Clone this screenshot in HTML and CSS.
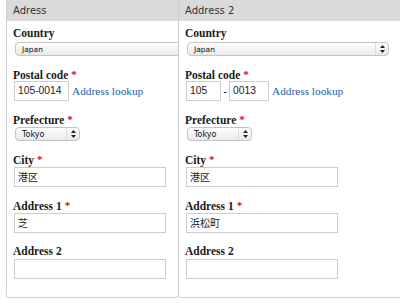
FILE: index.html
```html
<!DOCTYPE html>
<html>
<head>
<meta charset="utf-8">
<link rel="stylesheet" href="styles.css">
</head>
<body>
<div class="page">
  <section class="panel panel-left">
    <div class="panel-head">Adress</div>
    <div class="panel-body">
      <div class="field">
        <div class="label">Country</div>
        <div class="select select-wide"><span>Japan</span></div>
      </div>
      <div class="field">
        <div class="label">Postal code<span class="req">*</span></div>
        <div class="row">
          <div class="input input-postal">105-0014</div>
          <a class="lookup">Address lookup</a>
        </div>
      </div>
      <div class="field">
        <div class="label">Prefecture<span class="req">*</span></div>
        <div class="select select-small"><span>Tokyo</span><span class="arrows"><svg width="5" height="8" viewBox="0 0 5 8"><path d="M2.5 0L5 3H0z M2.5 8L5 5H0z" fill="#222"/></svg></span></div>
      </div>
      <div class="field">
        <div class="label">City<span class="req">*</span></div>
        <div class="input input-full">港区</div>
      </div>
      <div class="field">
        <div class="label">Address 1<span class="req">*</span></div>
        <div class="input input-full">芝</div>
      </div>
      <div class="field">
        <div class="label">Address 2</div>
        <div class="input input-full"></div>
      </div>
    </div>
  </section>
  <section class="panel panel-right">
    <div class="panel-head">Address 2</div>
    <div class="panel-body">
      <div class="field">
        <div class="label">Country</div>
        <div class="select select-wide2"><span>Japan</span><span class="arrows"><svg width="5" height="8" viewBox="0 0 5 8"><path d="M2.5 0L5 3H0z M2.5 8L5 5H0z" fill="#222"/></svg></span></div>
      </div>
      <div class="field">
        <div class="label">Postal code<span class="req">*</span></div>
        <div class="row">
          <div class="input input-p1">105</div>
          <span class="dash">-</span>
          <div class="input input-p2">0013</div>
          <a class="lookup">Address lookup</a>
        </div>
      </div>
      <div class="field">
        <div class="label">Prefecture<span class="req">*</span></div>
        <div class="select select-small"><span>Tokyo</span><span class="arrows"><svg width="5" height="8" viewBox="0 0 5 8"><path d="M2.5 0L5 3H0z M2.5 8L5 5H0z" fill="#222"/></svg></span></div>
      </div>
      <div class="field">
        <div class="label">City<span class="req">*</span></div>
        <div class="input input-full">港区</div>
      </div>
      <div class="field">
        <div class="label">Address 1<span class="req">*</span></div>
        <div class="input input-full">浜松町</div>
      </div>
      <div class="field">
        <div class="label">Address 2</div>
        <div class="input input-full"></div>
      </div>
    </div>
  </section>
</div>
</body>
</html>
```
FILE: styles.css
```css
html, body {
  margin: 0;
  padding: 0;
  background: #fff;
  width: 400px;
  height: 304px;
  overflow: hidden;
}
.page {
  display: flex;
  align-items: flex-start;
  padding-left: 6px;
}
.panel {
  border: 1px solid #cfcfcf;
  border-top: none;
  border-radius: 0 0 4px 4px;
  background: #fff;
  height: 298px;
  box-sizing: border-box;
  overflow: hidden;
  flex: none;
}
.panel-left {
  width: 173px;
}
.panel-right {
  width: 240px;
  margin-left: -1px;
}
.panel-head {
  height: 21px;
  background: #dadada;
  font-family: "DejaVu Sans", Verdana, sans-serif;
  font-size: 10px;
  color: #333;
  line-height: 22px;
  padding-left: 6px;
}
.panel-body {
  padding: 5px 0 0 6px;
}
.field {
  margin-bottom: 11px;
}
.label {
  font-family: "Liberation Serif", "Times New Roman", serif;
  font-weight: bold;
  font-size: 11.5px;
  color: #1a1a1a;
  line-height: 14px;
  height: 14px;
  white-space: nowrap;
}
.req {
  color: #e00;
  margin-left: 3px;
  font-size: 11px;
  vertical-align: 1px;
}
.select {
  display: flex;
  align-items: center;
  justify-content: space-between;
  height: 14px;
  border: 1px solid #c4c4c4;
  border-radius: 4px;
  background: linear-gradient(#fefefe, #e9e9e9);
  font-family: "DejaVu Sans", Verdana, sans-serif;
  font-size: 7.5px;
  color: #111;
  padding: 0 3px 0 6px;
  margin-left: 2px;
  margin-top: 1px;
  box-sizing: border-box;
  white-space: nowrap;
}
.select-wide { width: 170px; margin-top: 2px; }
.select-wide2 { width: 202px; margin-top: 2px; }
.select-small { width: 65px; font-size: 8px; }
.arrows {
  display: flex;
  align-items: center;
  padding-left: 4px;
  border-left: 1px solid #dcdcdc;
  height: 12px;
}
.row {
  display: flex;
  align-items: center;
  margin-left: 1px;
}
.input {
  height: 20px;
  border: 1px solid #cdcdcd;
  box-sizing: border-box;
  font-family: "Liberation Sans", Arial, sans-serif;
  font-size: 10.3px;
  color: #222;
  line-height: 18px;
  padding-left: 3px;
  background: #fff;
  white-space: nowrap;
  flex: none;
}
.input-postal { width: 55px; }
.input-full {
  width: 152px;
  margin-top: 1px;
  margin-left: 1px;
  font-family: "Noto Sans CJK JP", sans-serif;
  font-size: 10px;
}
.input-p1 { width: 35px; }
.input-p2 { width: 40px; }
.dash {
  font-family: "Liberation Sans", sans-serif;
  font-size: 11px;
  width: 8px;
  text-align: center;
}
.lookup {
  font-family: "Liberation Serif", "Times New Roman", serif;
  font-size: 11.3px;
  color: #1b5faa;
  margin-left: 3px;
  white-space: nowrap;
}
```
